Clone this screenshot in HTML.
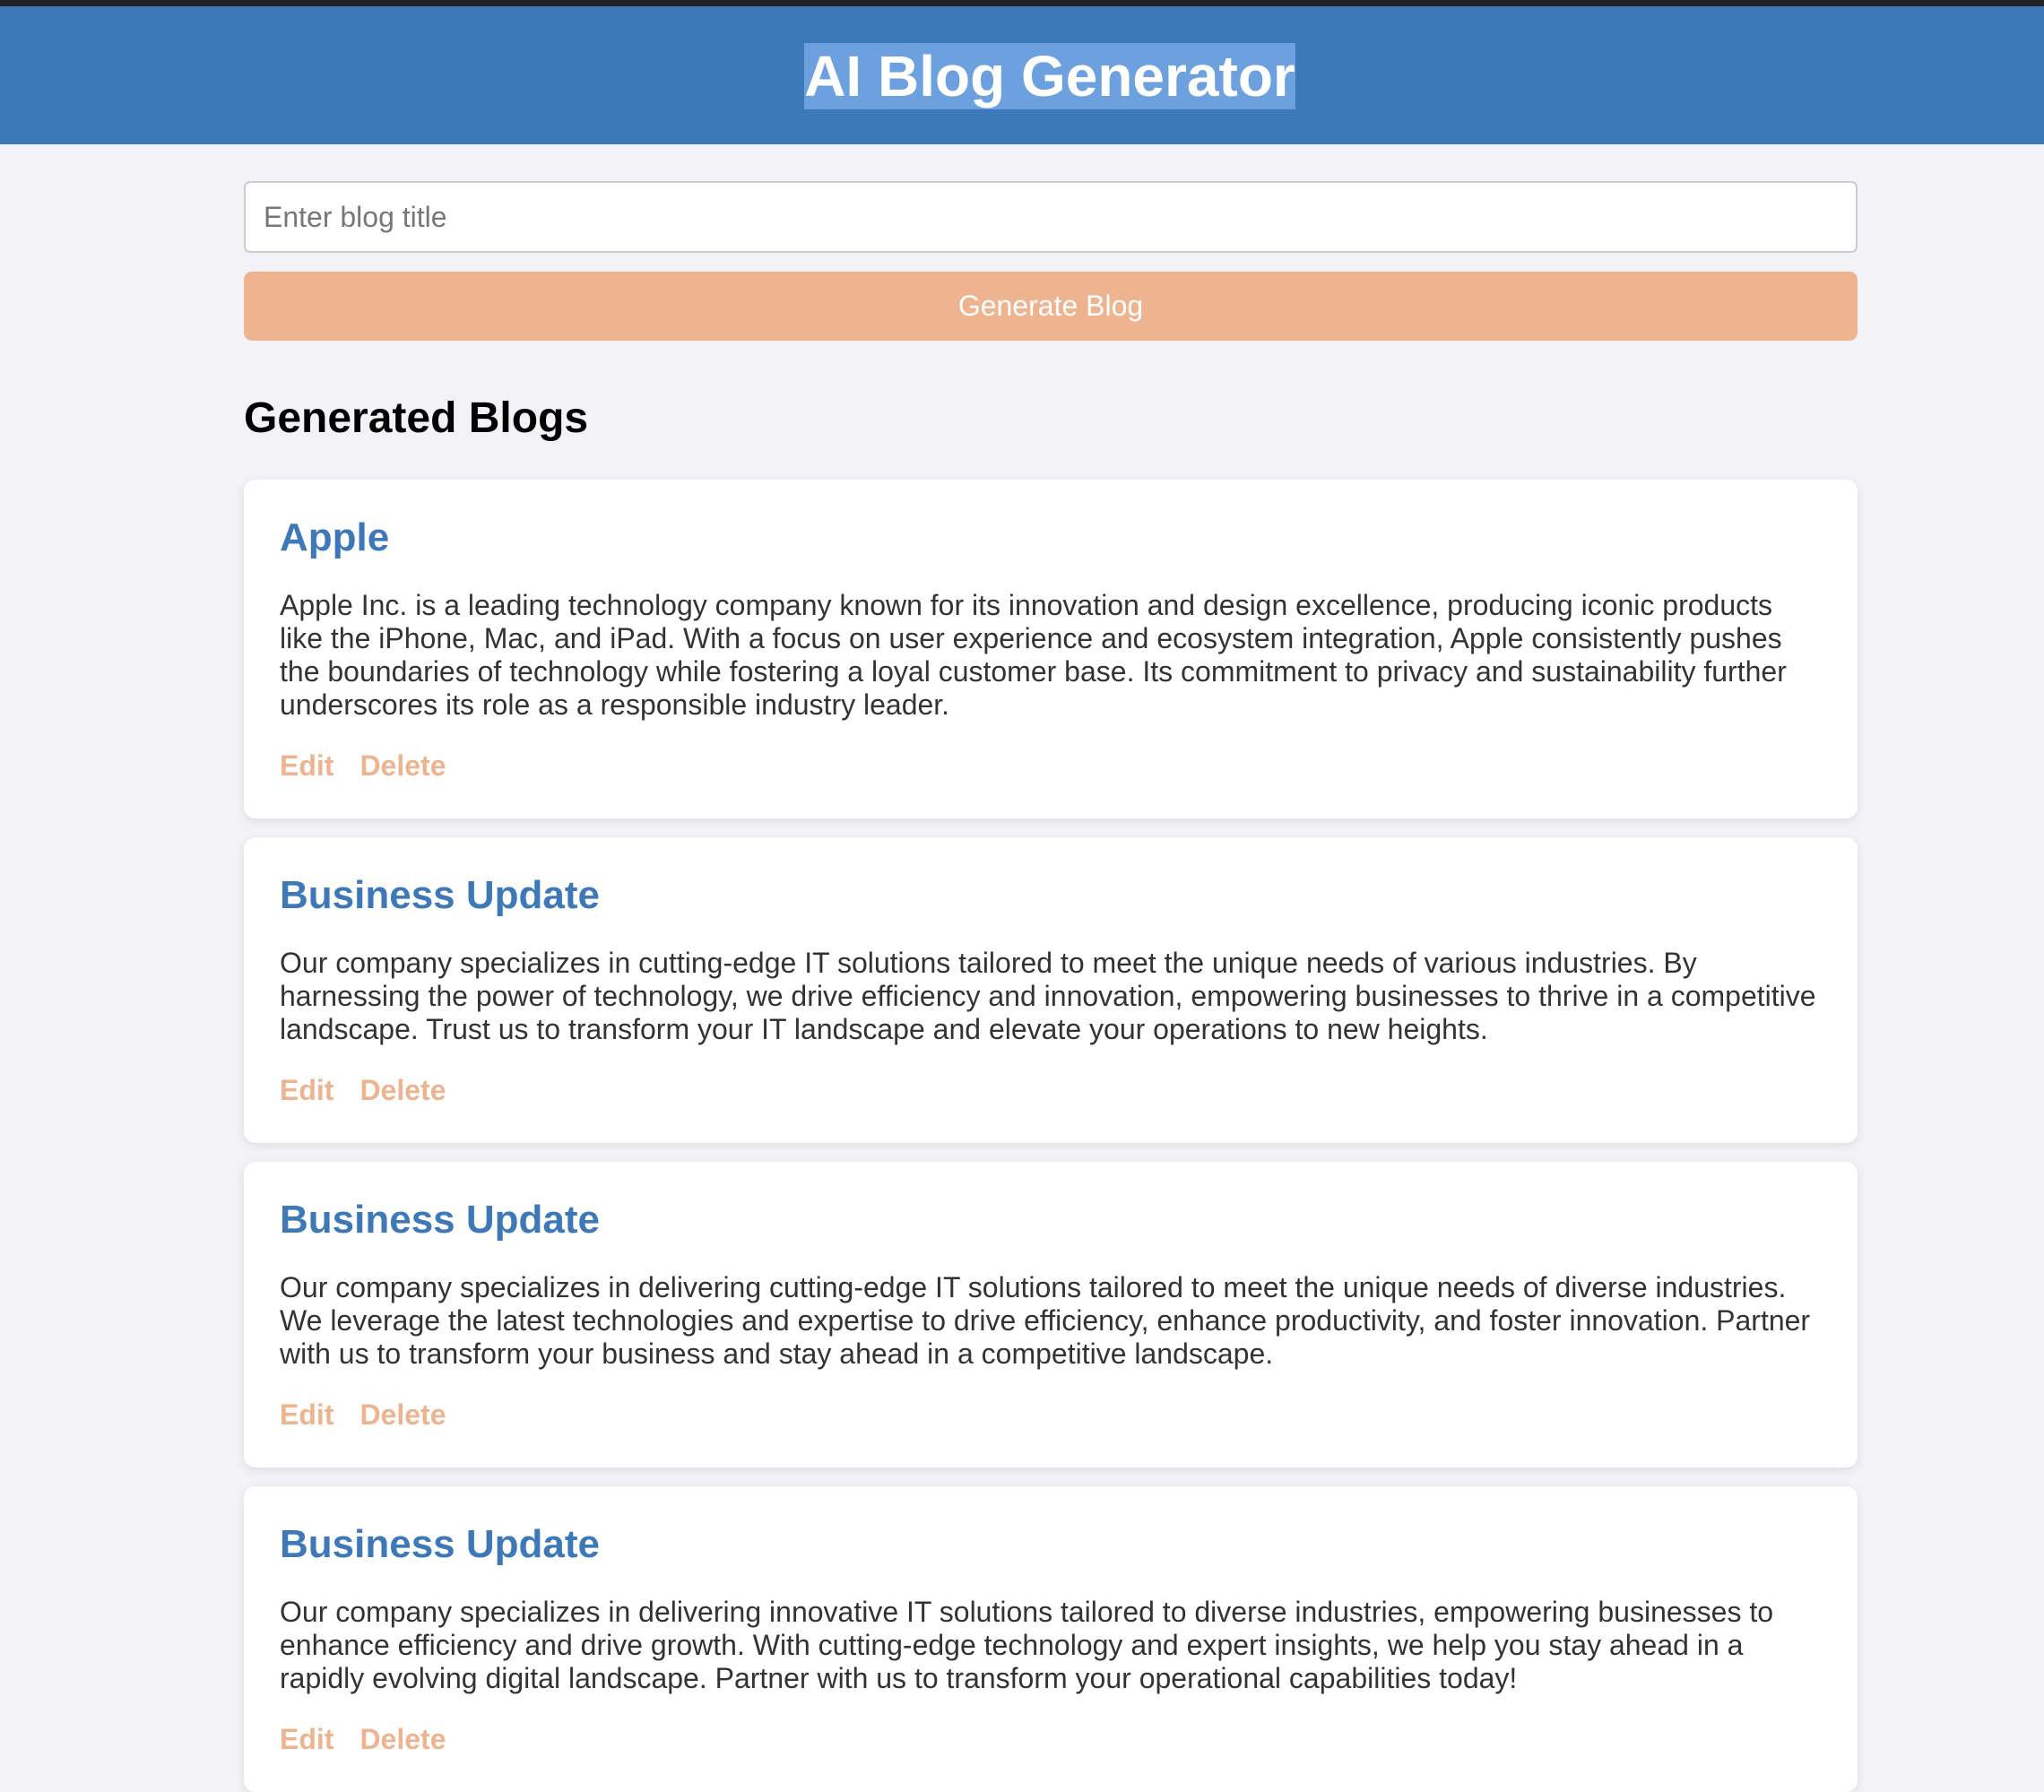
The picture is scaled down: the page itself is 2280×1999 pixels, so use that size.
<!DOCTYPE html>
<html><head><meta charset="utf-8"><style>
*{box-sizing:border-box;margin:0;padding:0}
html,body{width:2280px;height:1994px;overflow:hidden}
body{background:#f3f3f7;font-family:"Liberation Sans",Arial,sans-serif;color:#333}
.topbar{height:7px;background:#232326}
header{height:154px;background:#3d79b8;text-align:center;padding-top:41px;padding-left:62px}
header h1{display:inline-block;font-size:64px;line-height:74px;color:#fff;background:#6ca0df;font-weight:bold}
.wrap{position:absolute;left:272px;width:1800px;top:0}
.inp{position:absolute;top:202px;left:0;width:1800px;height:80px;background:#fff;border:2px solid #ccc;border-radius:7px;font-size:32px;color:#777;padding-left:20px;line-height:76px}
.btn{position:absolute;top:303px;left:0;width:1800px;height:77px;background:#edb48f;border-radius:9px;color:#fff;font-size:32px;text-align:center;line-height:77px}
.gh{position:absolute;top:438px;left:0;font-size:48px;font-weight:bold;color:#000;line-height:58px}
.card{position:absolute;left:0;width:1800px;background:#fff;border-radius:13px;box-shadow:0 3px 10px rgba(0,0,0,.09);padding:40px 40px 40px}
.card h2{font-size:44px;line-height:49px;color:#3d79b8;font-weight:bold}
.card p{margin-top:33px;font-size:32px;line-height:37px;color:#333}
.act{margin-top:31px;font-size:32px;line-height:37px;font-weight:bold;color:#edb48f}
.act span{margin-right:29px}
</style></head><body>
<div class="topbar"></div>
<header><h1>AI Blog Generator</h1></header>
<div class="wrap">
<div class="inp">Enter blog title</div>
<div class="btn">Generate Blog</div>
<div class="gh">Generated Blogs</div>
<div class="card" style="top:535px"><h2>Apple</h2><p>Apple Inc. is a leading technology company known for its innovation and design excellence, producing iconic products like the iPhone, Mac, and iPad. With a focus on user experience and ecosystem integration, Apple consistently pushes the boundaries of technology while fostering a loyal customer base. Its commitment to privacy and sustainability further underscores its role as a responsible industry leader.</p><div class="act"><span>Edit</span>Delete</div></div>
<div class="card" style="top:934px"><h2>Business Update</h2><p>Our company specializes in cutting-edge IT solutions tailored to meet the unique needs of various industries. By harnessing the power of technology, we drive efficiency and innovation, empowering businesses to thrive in a competitive landscape. Trust us to transform your IT landscape and elevate your operations to new heights.</p><div class="act"><span>Edit</span>Delete</div></div>
<div class="card" style="top:1296px"><h2>Business Update</h2><p>Our company specializes in delivering cutting-edge IT solutions tailored to meet the unique needs of diverse industries. We leverage the latest technologies and expertise to drive efficiency, enhance productivity, and foster innovation. Partner with us to transform your business and stay ahead in a competitive landscape.</p><div class="act"><span>Edit</span>Delete</div></div>
<div class="card" style="top:1658px"><h2>Business Update</h2><p>Our company specializes in delivering innovative IT solutions tailored to diverse industries, empowering businesses to enhance efficiency and drive growth. With cutting-edge technology and expert insights, we help you stay ahead in a rapidly evolving digital landscape. Partner with us to transform your operational capabilities today!</p><div class="act"><span>Edit</span>Delete</div></div>
</div>
</body></html>
